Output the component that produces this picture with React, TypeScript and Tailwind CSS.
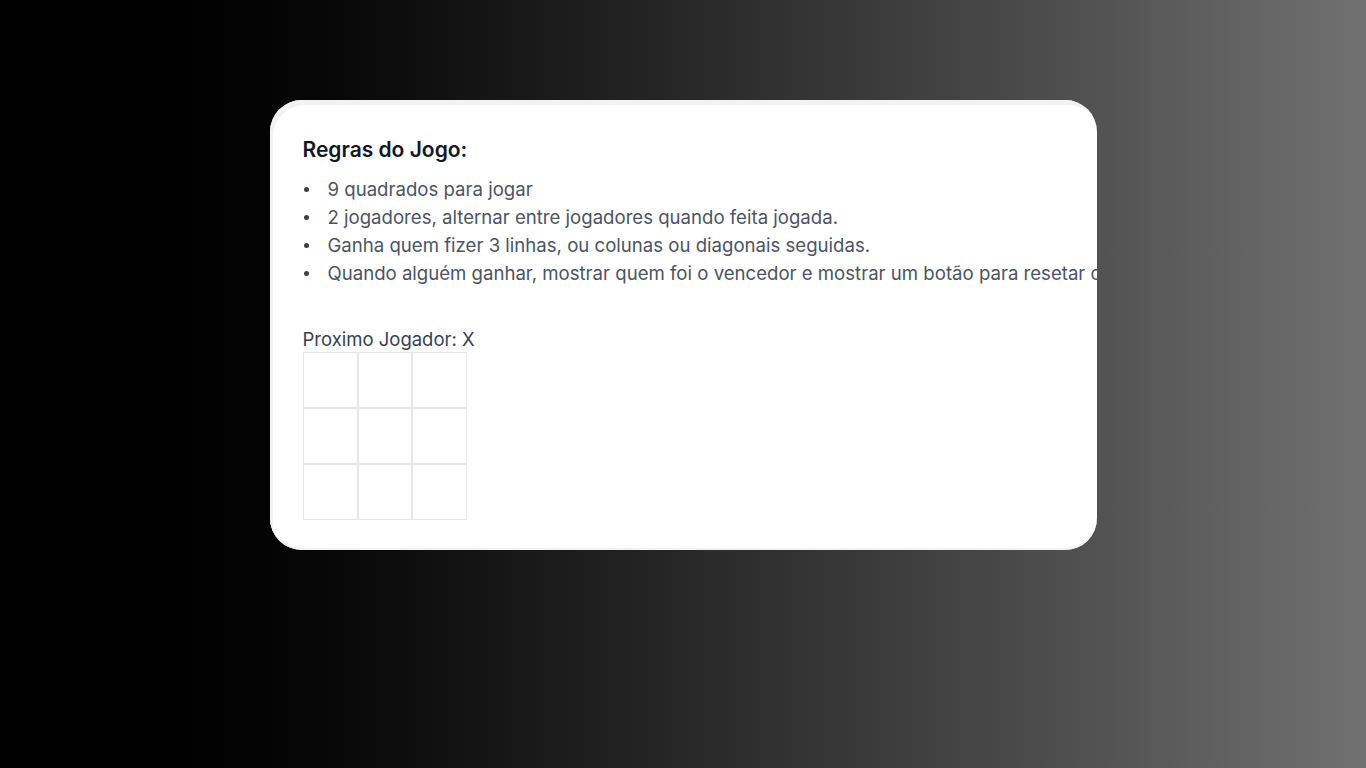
import React, { useState } from "react";

const rules = [
  "9 quadrados para jogar",
  "2 jogadores, alternar entre jogadores quando feita jogada.",
  "Ganha quem fizer 3 linhas, ou colunas ou diagonais seguidas.",
  "Quando alguém ganhar, mostrar quem foi o vencedor e mostrar um botão para resetar o jogo.",
];

export default function App() {
  const [squares, setSquares] = useState<(string | null)[]>(Array(9).fill(null));
  const [xIsNext, setXIsNext] = useState(true);

  const handleClick = (i: number) => {
    if (squares[i]) return;
    const next = squares.slice();
    next[i] = xIsNext ? "X" : "O";
    setSquares(next);
    setXIsNext(!xIsNext);
  };

  return (
    <div className="w-full h-[768px] bg-linear-to-r from-black to-[#717171] font-['Inter',sans-serif] pt-[100px]">
      <div className="mx-auto w-[827px] h-[450px] bg-white rounded-[32px] overflow-hidden shadow-[inset_3px_5px_0_#f1f2f4,inset_0_-2px_0_#f1f2f4] pt-[36px] pl-[33px]">
        <h2 className="text-[21px] leading-7 font-semibold text-gray-900">Regras do Jogo:</h2>
        <ul className="mt-[11px] text-[18.6px] leading-7 text-gray-600 whitespace-nowrap">
          {rules.map((r) => (
            <li key={r} className="flex items-center">
              <span className="w-[25px] shrink-0 pl-[1px]">
                <span className="block h-[5px] w-[5px] rounded-full bg-gray-700" />
              </span>
              {r}
            </li>
          ))}
        </ul>
        <div className="mt-[40px] text-[18.5px] leading-6 text-gray-700">
          Proximo Jogador: {xIsNext ? "X" : "O"}
        </div>
        <div className="mt-[1px] grid grid-cols-[55px_54px_55px] w-fit">
          {squares.map((s, i) => (
            <button
              key={i}
              onClick={() => handleClick(i)}
              className="h-[56px] border border-gray-200 text-2xl font-semibold text-gray-800"
            >
              {s}
            </button>
          ))}
        </div>
      </div>
    </div>
  );
}
